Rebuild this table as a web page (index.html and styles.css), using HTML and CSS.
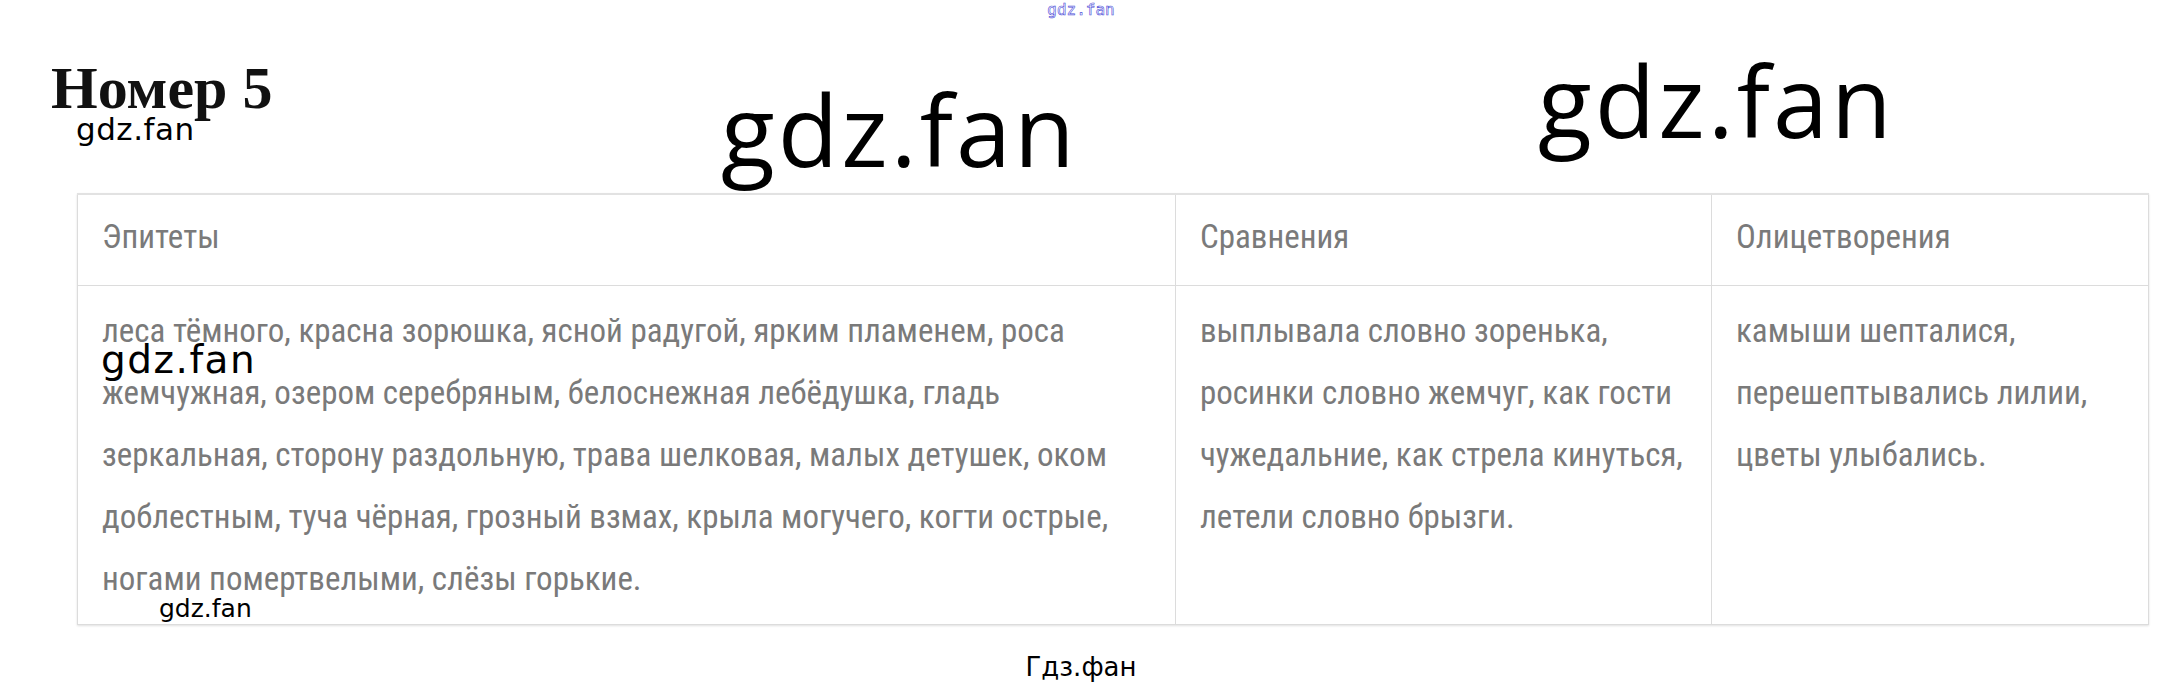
FILE: index.html
```html
<!DOCTYPE html>
<html lang="ru">
<head>
<meta charset="utf-8">
<title>Номер 5</title>
<link rel="stylesheet" href="styles.css">
</head>
<body>
<div class="page">
  <div class="topmark">gdz.fan</div>
  <div class="head">
    <h1 class="title">Номер 5</h1>
    <span class="wm wm-sub">gdz.fan</span>
    <span class="wm wm-big wm-big1">gdz.fan</span>
    <span class="wm wm-big wm-big2">gdz.fan</span>
  </div>
  <div class="tablewrap">
    <table class="tbl">
      <colgroup>
        <col class="c1">
        <col class="c2">
        <col class="c3">
      </colgroup>
      <thead>
        <tr>
          <th>Эпитеты</th>
          <th>Сравнения</th>
          <th>Олицетворения</th>
        </tr>
      </thead>
      <tbody>
        <tr>
          <td>леса тёмного, красна зорюшка, ясной радугой, ярким пламенем, роса<br>жемчужная, озером серебряным, белоснежная лебёдушка, гладь<br>зеркальная, сторону раздольную, трава шелковая, малых детушек, оком<br>доблестным, туча чёрная, грозный взмах, крыла могучего, когти острые,<br>ногами помертвелыми, слёзы горькие.</td>
          <td>выплывала словно зоренька,<br>росинки словно жемчуг, как гости<br>чужедальние, как стрела кинуться,<br>летели словно брызги.</td>
          <td>камыши шепталися,<br>перешептывались лилии,<br>цветы улыбались.</td>
        </tr>
      </tbody>
    </table>
    <span class="wm wm-mid">gdz.fan</span>
    <span class="wm wm-low">gdz.fan</span>
  </div>
  <div class="footer">Гдз.фан</div>
</div>
</body>
</html>
```

FILE: styles.css
```css
html, body {
  margin: 0;
  padding: 0;
  background: #ffffff;
}

.page {
  width: 2162px;
  height: 686px;
  overflow: hidden;
  position: relative;
}

.topmark {
  height: 20px;
  line-height: 20px;
  text-align: center;
  font-family: "DejaVu Sans Mono", monospace;
  font-size: 16px;
  color: transparent;
  -webkit-text-stroke: 0.6px #4a4ad8;
}

.head {
  position: relative;
  height: 135px;
  padding: 38px 0 0 51px;
}

.title {
  margin: 0;
  font-family: "Liberation Serif", "Times New Roman", serif;
  font-weight: bold;
  font-size: 60px;
  line-height: 1;
  color: #111;
}

.wm {
  position: absolute;
  line-height: 1;
  color: #000;
  white-space: nowrap;
}

.wm-sub {
  left: 76px;
  top: 94px;
  font-family: "DejaVu Sans", sans-serif;
  font-size: 31px;
  letter-spacing: 0.5px;
}

.wm-big {
  font-family: "Open Sans", sans-serif;
  font-size: 99px;
  letter-spacing: 3px;
}

.wm-big1 {
  left: 721px;
  top: 59px;
}

.wm-big2 {
  left: 1538px;
  top: 30px;
}

.tablewrap {
  position: relative;
  margin-left: 77px;
  width: 2071px;
}

.tbl {
  border-collapse: collapse;
  table-layout: fixed;
  width: 2071px;
  box-shadow: 0 1px 2px rgba(0, 0, 0, 0.12);
}

.c1 { width: 1098px; }
.c2 { width: 536px; }
.c3 { width: 437px; }

.tbl th,
.tbl td {
  border: 1px solid #dcdcdc;
  padding: 14px 24px;
  text-align: left;
  vertical-align: top;
  font-family: "Roboto Condensed", Roboto, sans-serif;
  font-stretch: condensed;
  font-weight: normal;
  font-size: 33px;
  line-height: 62px;
  color: #7a7a7a;
  white-space: nowrap;
}

.tbl th {
  border-top: 2px solid #e2e2e2;
  padding-top: 11px;
  padding-bottom: 17px;
}

.wm-mid {
  left: 24px;
  top: 147px;
  font-family: "DejaVu Sans", sans-serif;
  font-size: 39px;
  letter-spacing: 1.5px;
}

.wm-low {
  left: 82px;
  top: 403px;
  font-family: "DejaVu Sans", sans-serif;
  font-size: 25px;
}

.footer {
  margin-top: 29px;
  text-align: center;
  font-family: "DejaVu Sans", sans-serif;
  font-size: 26px;
  line-height: 1;
  color: #000;
}
```
